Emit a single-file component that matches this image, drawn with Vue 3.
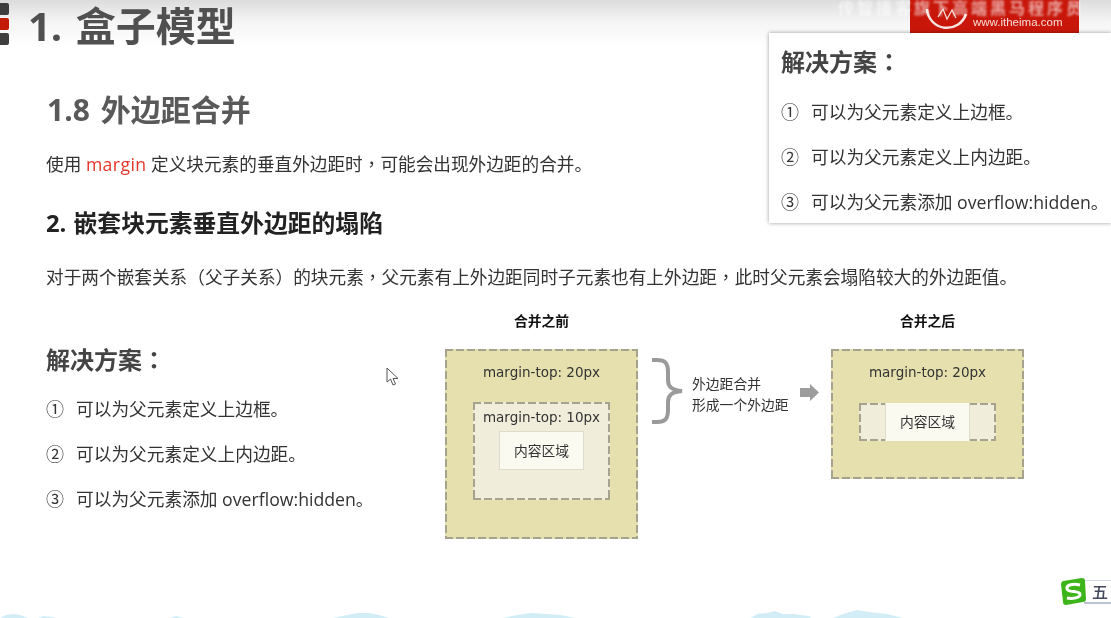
<script setup>
const fixes = [
  { n: '①', t: '可以为父元素定义上边框。' },
  { n: '②', t: '可以为父元素定义上内边距。' },
  { n: '③', t: '可以为父元素添加 overflow:hidden。' }
]
const clouds = [
  { d: 'M0 10 L6 7 L14 6 L20 7 L28 10 Z M38 10 L44 8 L52 9 L56 10 Z M170 10 L176 8 L184 10 Z', x: 0, w: 190 },
  { d: 'M0 10 L14 7 L24 5 L36 5 L46 7 L56 10 Z', x: 333, w: 60 },
  { d: 'M0 10 L14 7 L28 5 L44 6 L58 7 L72 10 Z', x: 503, w: 75 },
  { d: 'M0 10 L6 6 L16 5 L24 3 L32 6 L42 6 L58 8 L60 10 Z M82 10 L92 6 L106 2 L118 4 L136 6 L152 10 Z', x: 751, w: 155 }
]
</script>

<template>
  <div class="page">
    <header class="top">
      <div class="bars"><i></i><i class="red"></i><i></i></div>
      <h1>1. 盒子模型</h1>
      <div class="brand">
        <svg class="ring" width="46" height="33" viewBox="0 0 46 33">
          <path d="M3 9 A20 20 0 0 0 42 14" fill="none" stroke="#f6e3df" stroke-width="2.5"/>
          <path d="M14 17 L19 9 L23 19 L28 10 L32 18" fill="none" stroke="#f6e3df" stroke-width="1.2"/>
        </svg>
        <span class="url">www.itheima.com</span>
      </div>
      <div class="faint">传智播客旗下高端黑马程序员</div>
    </header>

    <main class="slide">
      <h2>1.8 外边距合并</h2>
      <p class="lead">使用 <em>margin</em> 定义块元素的垂直外边距时<span class="p">，</span>可能会出现外边距的合并。</p>
      <h3>2. 嵌套块元素垂直外边距的塌陷</h3>
      <p class="desc">对于两个嵌套关系（父子关系）的块元素<span class="p">，</span>父元素有上外边距同时子元素也有上外边距<span class="p">，</span>此时父元素会塌陷较大的外边距值。</p>

      <section class="solve">
        <div class="solution">
          <h4>解决方案<span class="p">：</span></h4>
          <ol>
            <li v-for="f in fixes" :key="f.n"><span class="num">{{ f.n }}</span>{{ f.t }}</li>
          </ol>
        </div>

        <div class="diagram">
          <figure class="fig">
            <figcaption>合并之前</figcaption>
            <div class="outer tall dash">
              <div class="label">margin-top: 20px</div>
              <div class="inner dash">
                <div class="label">margin-top: 10px</div>
                <div class="content">内容区域</div>
              </div>
            </div>
          </figure>

          <svg class="brace" width="32" height="66" viewBox="0 0 32 66">
            <path d="M1 2 H6 C14 2 17 5 17 14 V22 C17 29 21 32 31 33 C21 34 17 37 17 44 V52 C17 61 14 64 6 64 H1" fill="none" stroke="#9a9a9a" stroke-width="4"/>
          </svg>
          <div class="note">外边距合并<br>形成一个外边距</div>
          <svg class="arrow" width="20" height="17" viewBox="0 0 20 17">
            <path d="M0 4 H10 V0 L19 8.5 L10 17 V13 H0 Z" fill="#9c9c9c"/>
          </svg>

          <figure class="fig">
            <figcaption>合并之后</figcaption>
            <div class="outer dash">
              <div class="label">margin-top: 20px</div>
              <div class="inner flat dash">
                <div class="content">内容区域</div>
              </div>
            </div>
          </figure>
        </div>
      </section>
    </main>

    <aside class="card">
      <h4>解决方案<span class="p">：</span></h4>
      <ol>
        <li v-for="f in fixes" :key="f.n"><span class="num">{{ f.n }}</span>{{ f.t }}</li>
      </ol>
    </aside>

    <svg class="cursor" width="14" height="20" viewBox="0 0 14 20">
      <path d="M1 1 V15 L4.5 12 L7 18 L9.5 17 L7 11.5 H12 Z" fill="#fff" stroke="#555" stroke-width="1"/>
    </svg>

    <svg v-for="c in clouds" :key="c.x" class="cloud" :style="{ left: c.x + 'px', width: c.w + 'px' }" :viewBox="`0 0 ${c.w} 10`" height="10">
      <path :d="c.d" fill="#d3edf7"/>
    </svg>

    <div class="ime">
      <svg class="ime-s" width="27" height="29" viewBox="0 0 27 29">
        <path d="M3 4 L22 1 Q25 1 25 4 L26 22 Q26 25 23 25 L6 28 Q3 28 3 25 L1 7 Q1 5 3 4 Z" fill="#3db51a"/>
        <path d="M20 8 C13 6 6 8 7 12 C8 16 19 13 20 17 C21 21 12 22 7 21" fill="none" stroke="#fff" stroke-width="3"/>
      </svg>
      <span>五</span>
    </div>
  </div>
</template>

<style>
html, body { margin: 0; background: #fff; }
</style>

<style scoped>
.page {
  position: relative;
  width: 1111px;
  height: 618px;
  overflow: hidden;
  background: #fff;
  color: #333;
  font-family: "Open Sans", "Noto Sans CJK SC", sans-serif;
}
.page > * { filter: blur(0.45px); }
h1, h2, h3, h4, p, ol, figure { margin: 0; padding: 0; }
ol { list-style: none; }
.p { font-family: "Noto Sans CJK TC", sans-serif; }

.top {
  height: 46px;
  display: flex;
  align-items: flex-start;
  background: linear-gradient(#dcdcdc, #f4f4f4 45%, #fff);
}
.bars { width: 9px; margin-top: 3px; display: flex; flex-direction: column; gap: 3px; }
.bars i { display: block; height: 12px; background: #3e3e3e; border-radius: 0 2px 2px 0; }
.bars i.red { background: #c41a08; }
h1 {
  margin-left: 19px;
  font-size: 40px;
  line-height: 46px;
  margin-top: 3px;
  font-weight: 700;
  word-spacing: 3px;
  color: #505050;
  white-space: nowrap;
}
.faint {
  position: absolute;
  left: 838px;
  top: 0;
  font-size: 16px;
  line-height: 16px;
  letter-spacing: 3px;
  font-weight: 700;
  color: rgba(255, 255, 255, 0.6);
  white-space: nowrap;
  filter: blur(0.9px);
}
.brand {
  position: absolute;
  left: 910px;
  top: 0;
  width: 169px;
  height: 33px;
  background: #c8170a;
}
.ring { position: absolute; left: 14px; top: 0; }
.url {
  position: absolute;
  left: 63px;
  top: 14px;
  font-size: 11.5px;
  line-height: 16px;
  font-family: "Liberation Sans", sans-serif;
  color: #f5dcd7;
  white-space: nowrap;
}

.slide { padding: 0 0 0 46px; }
h2 {
  margin-top: 45px;
  margin-left: 1px;
  font-size: 30px;
  line-height: 38px;
  font-weight: 700;
  word-spacing: 3px;
  color: #595959;
}
.lead { margin-top: 23px; font-size: 17.65px; line-height: 24px; color: #333; white-space: nowrap; }
.lead em { font-style: normal; color: #e4352a; letter-spacing: 0.4px; }
h3 { margin-top: 32px; font-size: 23.8px; line-height: 30px; font-weight: 700; word-spacing: 1px; color: #222; white-space: nowrap; }
.desc { margin-top: 27px; font-size: 17.66px; line-height: 24px; color: #333; white-space: nowrap; }

.solve { display: flex; align-items: flex-start; }
.solution { width: 399px; flex: none; padding-top: 54px; }
.solution h4, .card h4 { font-size: 24px; line-height: 32px; font-weight: 700; color: #444; }
.solution ol { margin-top: 9px; }
li {
  display: flex;
  align-items: center;
  height: 45px;
  font-size: 17.7px;
  color: #333;
  white-space: nowrap;
}
.num { width: 30px; flex: none; font-size: 18px; line-height: 24px; color: #333; position: relative; top: 1px; }

.diagram { display: flex; align-items: flex-start; padding-top: 23px; }
.fig { width: 193px; flex: none; }
figcaption {
  height: 18px;
  margin-bottom: 19px;
  text-align: center;
  font-size: 13.8px;
  line-height: 18px;
  font-weight: 700;
  color: #111;
}
.dash {
  background-image:
    repeating-linear-gradient(90deg, #a5a28e 0 8px, transparent 8px 11px),
    repeating-linear-gradient(90deg, #a5a28e 0 8px, transparent 8px 11px),
    repeating-linear-gradient(180deg, #a5a28e 0 8px, transparent 8px 11px),
    repeating-linear-gradient(180deg, #a5a28e 0 8px, transparent 8px 11px);
  background-size: 100% 2px, 100% 2px, 2px 100%, 2px 100%;
  background-position: left top, left bottom, left top, right top;
  background-repeat: no-repeat;
}
.outer {
  box-sizing: border-box;
  height: 130px;
  background-color: #e5e0ae;
  padding-top: 14px;
  display: flex;
  flex-direction: column;
  align-items: center;
}
.outer.tall { height: 190px; }
.label {
  font-family: "DejaVu Sans", sans-serif;
  font-size: 13.5px;
  line-height: 18px;
  color: #333;
  white-space: nowrap;
}
.inner {
  box-sizing: border-box;
  width: 137px;
  height: 98px;
  margin-top: 21px;
  padding-top: 6px;
  background-color: #f0eedb;
  display: flex;
  flex-direction: column;
  align-items: center;
}
.inner.flat {
  height: 38px;
  margin-top: 22px;
  padding-top: 0;
  justify-content: center;
}
.content {
  box-sizing: border-box;
  width: 85px;
  height: 39px;
  margin-top: 5px;
  border: 1px solid #dedccb;
  background: #fbfaf1;
  text-align: center;
  font-size: 13.8px;
  line-height: 37px;
  color: #333;
}
.inner.flat .content { margin-top: 0; height: 38px; flex: none; border-width: 0 1px; }
.brace { flex: none; margin: 46px 0 0 13px; }
.note { flex: none; width: 108px; margin: 61px 0 0 9px; font-size: 13.8px; line-height: 21px; color: #333; white-space: nowrap; }
.arrow { flex: none; margin: 72px 11px 0 0; }

.card {
  position: absolute;
  left: 769px;
  top: 33px;
  width: 342px;
  height: 190px;
  box-sizing: border-box;
  padding: 12px 0 0 12px;
  background: #fff;
  box-shadow: 0 0 4px rgba(0, 0, 0, 0.4);
}
.card ol { margin-top: 10px; }

.cursor { position: absolute; left: 386px; top: 367px; }
.cloud { position: absolute; bottom: 0; }

.ime {
  position: absolute;
  left: 1060px;
  top: 577px;
  width: 51px;
  height: 29px;
}
.ime span {
  position: absolute;
  left: 24px;
  top: 3px;
  width: 27px;
  height: 24px;
  box-sizing: border-box;
  padding-left: 5px;
  border-top: 1px solid #d5dbe4;
  border-bottom: 2px solid #b9c4d3;
  background: #fff;
  text-align: center;
  font-size: 16px;
  line-height: 23px;
  font-weight: 500;
  color: #44485e;
}
.ime-s { position: absolute; left: 0; top: 0; z-index: 1; }
</style>
